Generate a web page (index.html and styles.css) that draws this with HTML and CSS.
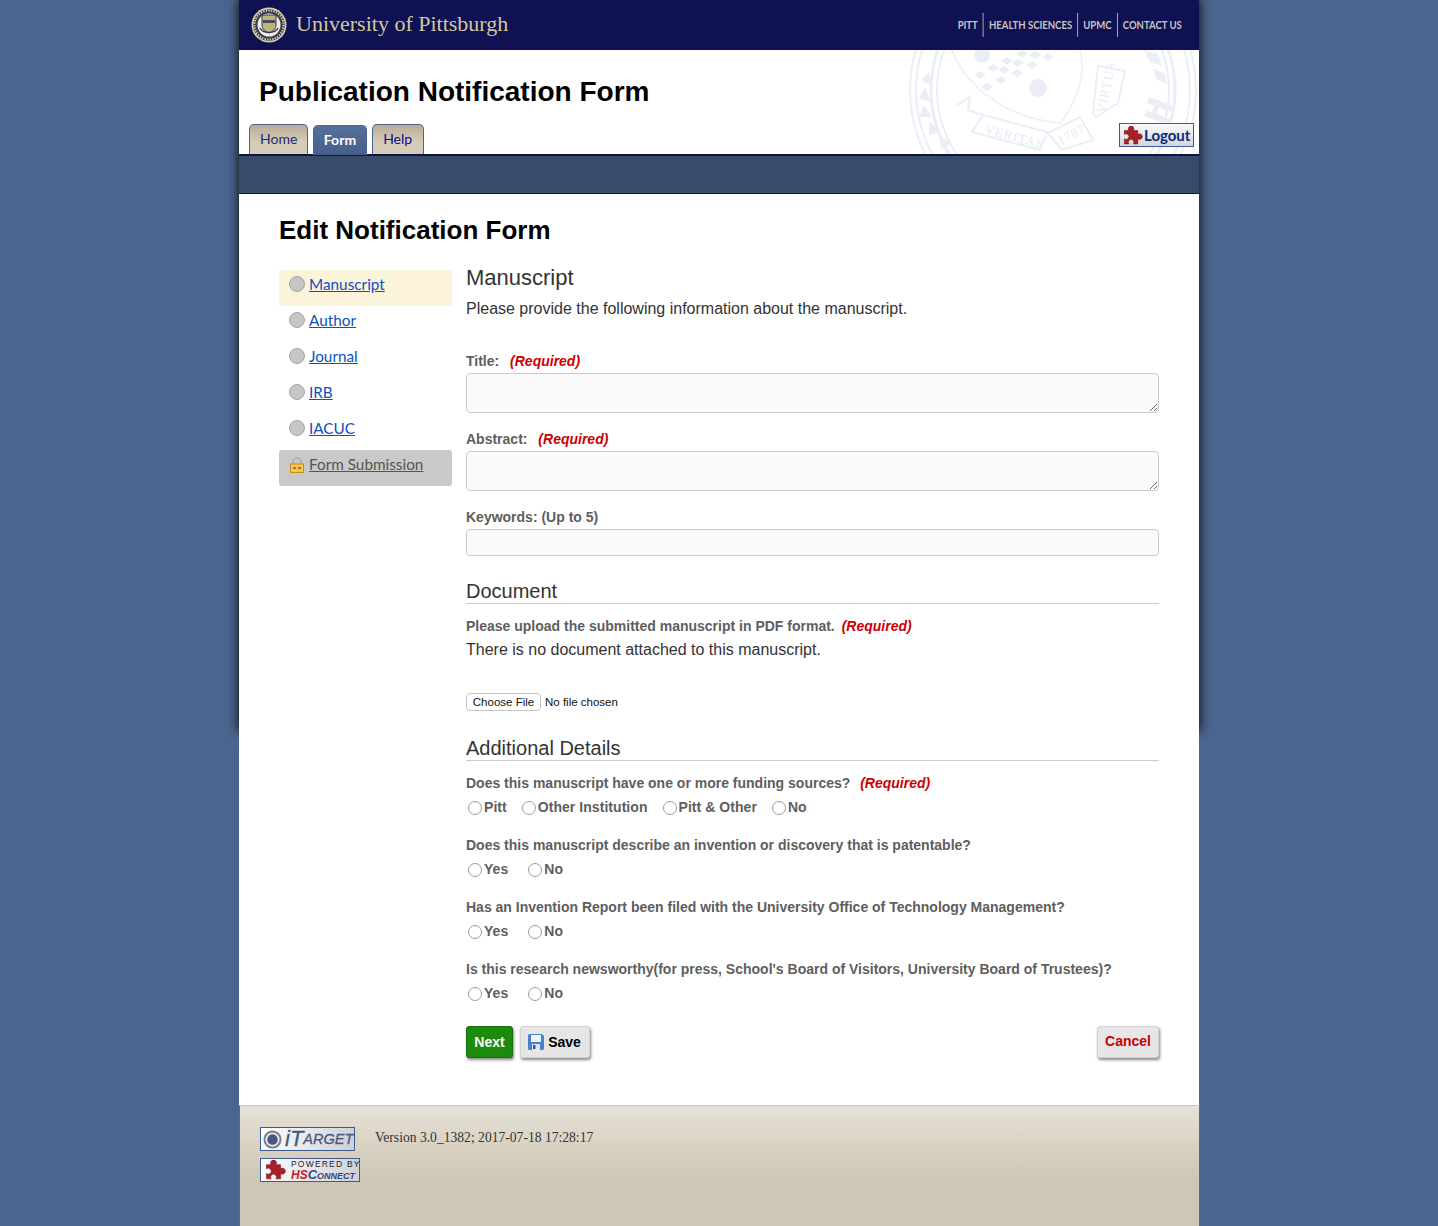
FILE: index.html
```html
<!DOCTYPE html>
<html lang="en">
<head>
<meta charset="utf-8">
<title>Publication Notification Form</title>
<link rel="stylesheet" href="styles.css">
</head>
<body>
<div class="shell">
  <header class="topbar">
    <div class="brand">
      <svg class="brand-seal" viewBox="0 0 36 36" aria-hidden="true">
        <circle cx="18" cy="18" r="17.5" fill="#d5d0a4"/>
        <circle cx="18" cy="18" r="15.8" fill="#3b3c5c"/>
        <circle cx="18" cy="18" r="14.6" fill="none" stroke="#d5d0a4" stroke-width="2" stroke-dasharray="1.4 1.2"/>
        <circle cx="18" cy="18" r="11.500" fill="#f2efd6"/>
        <path d="M11 8h14v10c0 4-3.500 6.500-7 8-3.500-1.500-7-4-7-8z" fill="#bdb67c" stroke="#34355a"/>
        <path d="M12 13h12v3H12z" fill="#4b4b5e"/>
        <path d="M9 21c3 6 15 6 18 0" fill="none" stroke="#34355a" stroke-width="1.500"/>
      </svg>
      <span class="brand-name">University of Pittsburgh</span>
    </div>
    <nav class="toplinks">
      <a href="#">PITT</a>
      <a href="#">HEALTH SCIENCES</a>
      <a href="#">UPMC</a>
      <a href="#">CONTACT US</a>
    </nav>
  </header>

  <div class="banner">
    <svg class="watermark" viewBox="0 0 290 104" aria-hidden="true">
      <g fill="none" stroke="#eceef7" stroke-width="2">
        <circle cx="145" cy="40" r="143"/>
        <circle cx="145" cy="40" r="137"/>
        <circle cx="145" cy="40" r="122" stroke-width="3"/>
        <circle cx="145" cy="40" r="116"/>
        <path d="M44 0C60 40 100 68 152 73 170 50 178 25 172 0" stroke-dasharray="3 1"/>
        <path d="M49 55l13-8-2 13 15 5M75 65l64 17-7 18-68-18zM140 83l32-16 13 23-31 10zM185 63l5-47 27 5-7 32-22 14z"/>
        <path d="M15 30l8 4-3-10zM12 48l9 2-4-10zM13 66l9 0-6-9zM22 84l8-3-8-7zM34 98l7-5-9-5z" fill="#eceef7"/>
      </g>
      <g fill="#eceef7">
        <circle cx="74" cy="5" r="8"/>
        <circle cx="130" cy="38" r="9"/>
        <path d="M85 14l6 4-6 4-6-4zM99 7l6 4-6 4-6-4zM114 0l6 4-6 4-6-4zM127 1l6 4-6 4-6-4zM140 3l6 4-6 4-6-4zM72 21l6 4-6 4-6-4zM96 16l6 4-6 4-6-4zM110 9l6 4-6 4-6-4zM124 11l6 4-6 4-6-4zM79 33l6 4-6 4-6-4zM93 26l6 4-6 4-6-4zM109 19l6 4-6 4-6-4z"/>
        <path d="M241 47l24 9-2 6-24-9zM238 60l24 9-2 6-24-9zM248 50l5 0-6 18-5 0z"/>
        <path d="M236 0l14 4 4 12-12-4zM245 18l12 6 2 10-11-5z"/>
      </g>
      <text class="wm-text" x="76" y="83" transform="rotate(15 76 83)">VERITAS</text>
      <text class="wm-text" x="152" y="95" transform="rotate(-27 152 95)">1787</text>
      <text class="wm-text" x="197" y="64" transform="rotate(-78 197 64)">VIRTUS</text>
    </svg>
    <h1 class="app-title">Publication Notification Form</h1>
    <div class="tabrow">
      <a class="tab" href="#">Home</a>
      <a class="tab tab-active" href="#">Form</a>
      <a class="tab tab-help" href="#">Help</a>
    </div>
    <a class="logout" href="#">
      <svg class="puzzle" viewBox="1.500 0 17.500 17" aria-hidden="true"><path d="M3 4h4a2.500 2.500 0 1 1 4 0h4v3.500a2.500 2.500 0 1 1 0 4V16h-4a2.500 2.500 0 1 0-4 0H3v-4.500a2.500 2.500 0 1 0 0-4z" fill="#a81f27" stroke="#7e1218" stroke-width=".5"/></svg>
      <span>Logout</span>
    </a>
  </div>
  <div class="subbar"></div>

  <main class="content">
    <h2 class="page-title">Edit Notification Form</h2>
    <div class="columns">
      <aside class="steps">
        <div class="step step-current"><span class="dot"></span><a href="#">Manuscript</a></div>
        <div class="step"><span class="dot"></span><a href="#">Author</a></div>
        <div class="step"><span class="dot"></span><a href="#">Journal</a></div>
        <div class="step"><span class="dot"></span><a href="#">IRB</a></div>
        <div class="step"><span class="dot"></span><a href="#">IACUC</a></div>
        <div class="step step-locked">
          <svg class="lock" viewBox="0 0 16 16" aria-hidden="true">
            <path d="M4 8V5a4 4 0 0 1 8 0v3" fill="none" stroke="#a9a9a9" stroke-width="1.500"/>
            <rect x="1.500" y="7" width="13" height="8.500" fill="#f2c554" stroke="#c68f1d"/>
            <path d="M4 10h3v2H4zM9 10h3v2H9z" fill="#a87716"/>
          </svg>
          <a href="#">Form Submission</a>
        </div>
      </aside>

      <form class="form">
        <h3 class="section-plain">Manuscript</h3>
        <p class="intro">Please provide the following information about the manuscript.</p>

        <label class="label label-first">Title: <em class="req">(Required)</em></label>
        <textarea class="field area"></textarea>

        <label class="label">Abstract: <em class="req">(Required)</em></label>
        <textarea class="field area"></textarea>

        <label class="label">Keywords: (Up to 5)</label>
        <input class="field line" type="text">

        <h3 class="section">Document</h3>
        <div class="label label-doc">Please upload the submitted manuscript in PDF format. <em class="req req-tight">(Required)</em></div>
        <p class="note">There is no document attached to this manuscript.</p>
        <input class="file" type="file">

        <h3 class="section section-extra">Additional Details</h3>

        <div class="label q-first">Does this manuscript have one or more funding sources? <em class="req req-q">(Required)</em></div>
        <div class="radios radios-tight">
          <label class="opt"><input type="radio" name="fund">Pitt</label>
          <label class="opt"><input type="radio" name="fund">Other Institution</label>
          <label class="opt"><input type="radio" name="fund">Pitt &amp; Other</label>
          <label class="opt"><input type="radio" name="fund">No</label>
        </div>

        <div class="label q">Does this manuscript describe an invention or discovery that is patentable?</div>
        <div class="radios">
          <label class="opt"><input type="radio" name="pat">Yes</label>
          <label class="opt"><input type="radio" name="pat">No</label>
        </div>

        <div class="label q">Has an Invention Report been filed with the University Office of Technology Management?</div>
        <div class="radios">
          <label class="opt"><input type="radio" name="rep">Yes</label>
          <label class="opt"><input type="radio" name="rep">No</label>
        </div>

        <div class="label q">Is this research newsworthy(for press, School's Board of Visitors, University Board of Trustees)?</div>
        <div class="radios">
          <label class="opt"><input type="radio" name="news">Yes</label>
          <label class="opt"><input type="radio" name="news">No</label>
        </div>

        <div class="actions">
          <button class="btn btn-next" type="button">Next</button>
          <button class="btn btn-save" type="button">
            <svg class="floppy" viewBox="0 0 16 16" aria-hidden="true">
              <path d="M0 1.500A1.500 1.500 0 0 1 1.500 0H14l2 2v12.500a1.500 1.500 0 0 1-1.500 1.500h-13A1.500 1.500 0 0 1 0 14.500z" fill="#4a80cc"/>
              <rect x="3" y="1" width="10" height="7" fill="#eef3fa"/>
              <rect x="4" y="10" width="8" height="6" fill="#dfe7f2"/>
              <rect x="5" y="11" width="2.500" height="4" fill="#2c5aa0"/>
            </svg>Save</button>
          <button class="btn btn-cancel" type="button">Cancel</button>
        </div>
      </form>
    </div>
  </main>

  <footer class="footer">
    <div class="badges">
      <div class="badge badge-target">
        <svg class="target" viewBox="0 0 20 20" aria-hidden="true"><circle cx="10" cy="10" r="8.500" fill="#e8e9ec" stroke="#777d88" stroke-width="2"/><circle cx="10" cy="10" r="5.500" fill="#47597f"/></svg>
        <span class="target-i">iT</span><span class="target-rest">ARGET</span>
      </div>
      <div class="badge badge-hs">
        <svg class="hs-puzzle" viewBox="1.500 0 17.500 17" aria-hidden="true"><path d="M3 4h4a2.500 2.500 0 1 1 4 0h4v3.500a2.500 2.500 0 1 1 0 4V16h-4a2.500 2.500 0 1 0-4 0H3v-4.500a2.500 2.500 0 1 0 0-4z" fill="#a81f27" stroke="#7e1218" stroke-width=".5"/></svg>
        <div class="hs-text">
          <span class="hs-top">POWERED BY</span>
          <span class="hs-bottom"><b>HS</b><i>C</i><small>ONNECT</small></span>
        </div>
      </div>
    </div>
    <p class="version">Version 3.0_1382; 2017-07-18 17:28:17</p>
  </footer>
</div>
</body>
</html>
```

FILE: styles.css
```css
* { box-sizing: border-box; }
html, body { margin: 0; padding: 0; }
body {
  background: #4b658f;
  font-family: "Liberation Sans", Arial, sans-serif;
  color: #333;
}
.shell {
  position: relative;
  width: 960px;
  margin: 0 auto;
  background: #fff;
}
.shell::before {
  content: "";
  position: absolute;
  left: 0;
  right: 0;
  top: 0;
  height: 730px;
  z-index: -1;
  box-shadow: 0 0 10px 1px #111;
}
.topbar {
  height: 50px;
  background: #0f1153;
  display: flex;
  justify-content: space-between;
  align-items: center;
  padding: 0 12px;
}
.brand { display: flex; align-items: center; gap: 9px; }
.brand-seal { width: 36px; height: 36px; }
.brand-name {
  font-family: "Liberation Serif", serif;
  font-size: 22px;
  color: #cfca9f;
  margin-bottom: 2px;
}
.toplinks {
  display: flex;
  align-items: center;
  transform: scaleX(.795);
  transform-origin: right center;
}
.toplinks a {
  font-family: Lato, sans-serif;
  font-size: 12px;
  font-weight: bold;
  color: #c8c5bd;
  text-decoration: none;
  line-height: 23px;
  height: 24px;
  padding: 0 6.500px;
  border-left: 1px solid #d5cf97;
}
.toplinks a:first-child { border-left: 0; }
.banner {
  position: relative;
  height: 106px;
  background: #fff;
  border-bottom: 2px solid #10153f;
}
.watermark {
  position: absolute;
  left: 669px;
  top: 0;
  width: 290px;
  height: 104px;
}
.wm-text { font-family: "Liberation Serif", serif; font-size: 13px; fill: #e8eaf4; letter-spacing: 1px; }
.app-title {
  position: relative;
  margin: 0;
  padding: 25px 0 0 20px;
  font-size: 28px;
  line-height: 34px;
  font-weight: bold;
  color: #000;
}
.tabrow {
  position: absolute;
  left: 10px;
  bottom: 0;
  display: flex;
  align-items: flex-end;
  gap: 5px;
}
.tab {
  display: block;
  height: 30px;
  padding: 0 10px;
  font-family: Lato, sans-serif;
  font-size: 14px;
  line-height: 28px;
  color: #1c2a72;
  text-decoration: none;
  background: linear-gradient(#b9ab94, #d6ccb9 60%);
  border: 1px solid #4a6490;
  border-bottom: 0;
  border-radius: 5px 5px 0 0;
}
.tab-active {
  position: relative;
  margin-bottom: -1px;
  padding: 0 9.500px;
  color: #fff;
  font-weight: bold;
  line-height: 28px;
  background: linear-gradient(#55709b, #475f8a);
  border-color: #4b658f;
}
.tab-help { padding: 0 10.500px; color: #0a0a8a; }
.logout {
  position: absolute;
  right: 5px;
  top: 73px;
  width: 75px;
  height: 24px;
  display: flex;
  align-items: center;
  gap: 1px;
  padding-left: 2px;
  border: 1px solid #3a57a0;
  background: linear-gradient(#fafafa, #d4d6dc);
  font-family: Lato, sans-serif;
  font-size: 15px;
  font-weight: bold;
  color: #0f2c78;
  text-decoration: none;
}
.puzzle { width: 21px; height: 19px; flex: none; }
.subbar {
  height: 38px;
  background: #394b69;
  border-bottom: 1px solid #10153f;
}
.content { padding: 20px 40px 0; background: #fff; }
.page-title {
  margin: 0 0 18px;
  font-size: 26px;
  line-height: 32px;
  font-weight: bold;
  color: #000;
}
.columns { display: flex; gap: 14px; }
.steps { width: 173px; flex: none; margin-top: 6px; }
.step {
  height: 36px;
  display: flex;
  align-items: flex-start;
  padding: 6px 10px 0;
  gap: 4px;
  font-family: Lato, sans-serif;
  font-size: 15.300px;
  line-height: 18px;
  border-radius: 3px;
}
.step a { color: #0d4fc4; margin-top: -1px; }
.step-current { background: #fbf3da; }
.step-locked { background: #c9c9c9; }
.step-locked a { color: #555; }
.dot {
  width: 16px;
  height: 16px;
  flex: none;
  border-radius: 50%;
  background: #c6c6c6;
  border: 1px solid #a5a5a5;
}
.lock { width: 16px; height: 16px; flex: none; margin-top: 1px; }
.form { width: 693px; }
.section-plain {
  margin: 0;
  padding-top: 0;
  font-size: 22px;
  line-height: 28px;
  font-weight: normal;
}
.intro { margin: 5px 0 0; font-size: 16px; line-height: 24px; }
.label {
  display: block;
  font-size: 14px;
  line-height: 20px;
  font-weight: bold;
  color: #5e5e5e;
  margin-top: 16px;
}
.label-first { margin-top: 30px; }
.req { color: #cc0000; font-style: italic; margin-left: 7px; }
.req-tight { margin-left: 3px; }
.req-q { margin-left: 6px; }
.field {
  display: block;
  width: 693px;
  margin: 2px 0 0;
  border: 1px solid #ccc;
  border-radius: 4px;
  background: #fafafa;
  font: inherit;
}
.area { height: 40px; }
.line { height: 27px; }
.section {
  margin: 24px 0 0;
  font-size: 20px;
  line-height: 23px;
  font-weight: normal;
  border-bottom: 1px solid #ccc;
  padding-bottom: 0;
}
.label-doc { margin-top: 12px; }
.note { margin: 2px 0 0; font-size: 16px; line-height: 24px; }
.file {
  display: block;
  margin-top: 31px;
  height: 18px;
  font-family: "Liberation Sans", Arial, sans-serif;
  font-size: 11.500px;
  color: #111;
}
.file::file-selector-button {
  height: 18px;
  width: 75px;
  margin-right: 4px;
  padding: 0;
  font: inherit;
  color: #111;
  background: #fff;
  border: 1px solid #c4c4c4;
  border-radius: 4px;
}
.section-extra { margin-top: 26px; }
.q-first { margin-top: 12px; }
.q { margin-top: 18px; }
.radios {
  display: flex;
  gap: 20px;
  margin-top: 4px;
  padding-left: 2px;
  height: 20px;
}
.radios-tight { gap: 15px; }
.opt {
  display: flex;
  align-items: center;
  font-size: 14px;
  line-height: 20px;
  font-weight: bold;
  letter-spacing: .05px;
  color: #5e5e5e;
}
.opt input {
  appearance: none;
  width: 14px;
  height: 14px;
  margin: 1px 2px 0 0;
  border: 1px solid #9c9c9c;
  border-radius: 50%;
  background: #fff;
}
.actions {
  display: flex;
  gap: 7px;
  margin-top: 23px;
}
.btn {
  height: 32px;
  border-radius: 3px;
  font-family: "Liberation Sans", Arial, sans-serif;
  font-size: 14px;
  font-weight: bold;
  padding: 0;
  box-shadow: 1px 2px 3px #888;
  display: flex;
  align-items: center;
  justify-content: center;
}
.btn-next { width: 47px; background: #1c8a0a; border: 1px solid #176e0a; color: #fff; }
.btn-save { width: 70px; gap: 4px; background: #e6e6e6; border: 1px solid #d2d2d2; color: #000; }
.floppy { width: 16px; height: 16px; margin-left: -1px; }
.btn-cancel { width: 62px; margin-left: auto; padding-bottom: 2px; background: #e6e6e6; border: 1px solid #d2d2d2; color: #cc0000; }
.footer {
  width: 961px;
  height: 121px;
  margin-top: 47px;
  padding: 21px 0 0 20px;
  display: flex;
  gap: 15px;
  background: linear-gradient(#e6e0d6, #cfc7b5 60%);
  border-top: 1px solid #cfc7b5;
  border-left: 1px solid #5b6a80;
  border-right: 1px solid #5b6a80;
}
.badges { display: flex; flex-direction: column; gap: 7px; }
.badge {
  display: flex;
  align-items: center;
  height: 24px;
  border: 1px solid #3d5b93;
  background: linear-gradient(105deg, #fff, #ccd0d6);
}
.badge-target {
  width: 95px;
  padding-left: 2px;
  font-style: italic;
  color: #47597f;
  -webkit-text-stroke: .3px #47597f;
}
.target { width: 19px; height: 19px; margin-right: 3px; }
.target-i { font-size: 22px; line-height: 22px; }
.target-rest { font-size: 14.500px; line-height: 22px; }
.badge-hs { width: 100px; padding-left: 2px; gap: 4px; }
.hs-puzzle { width: 24px; height: 20px; flex: none; }
.hs-text { display: flex; flex-direction: column; align-items: flex-start; white-space: nowrap; }
.hs-top { font-size: 8.500px; letter-spacing: 1.200px; color: #222; line-height: 10px; }
.hs-bottom { font-size: 12px; font-style: italic; line-height: 12px; color: #314a7c; font-weight: bold; }
.hs-bottom b { color: #c0222c; }
.hs-bottom i { font-size: 13px; }
.hs-bottom small { font-size: 9px; }
.version {
  margin: 0;
  font-family: "Liberation Serif", serif;
  font-size: 13.600px;
  line-height: 22px;
  color: #333;
}
```
